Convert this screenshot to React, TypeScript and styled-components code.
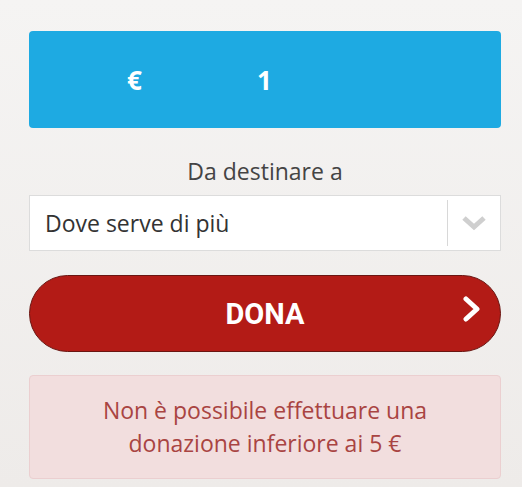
import React from "react";
import styled, { createGlobalStyle } from "styled-components";

const Global = createGlobalStyle`
  html, body { margin: 0; padding: 0; }
  body {
    background: linear-gradient(#f5f4f3, #eeebe9);
    min-height: 487px;
    font-family: "Open Sans", "Liberation Sans", sans-serif;
  }
`;

const Page = styled.div`
  padding: 31px 21px 0 29px;
  display: flex;
  flex-direction: column;
  width: 472px;
`;

const AmountBox = styled.div`
  height: 97px;
  background: #1eaae2;
  border-radius: 4px;
  display: grid;
  grid-template-columns: 98px 14px 116px auto;
  align-items: center;
  color: #fff;
  font-weight: 700;
  font-size: 26px;
`;

const Cell = styled.span<{ $col: number }>`
  grid-column: ${(p) => p.$col};
`;

const Label = styled.div`
  margin-top: 29px;
  text-align: center;
  font-size: 23px;
  color: #444;
  line-height: 28px;
`;

const Select = styled.div`
  margin-top: 10px;
  height: 56px;
  background: #fff;
  border: 1px solid #dcdcdc;
  display: flex;
  align-items: center;
  box-sizing: border-box;
`;

const SelectText = styled.span`
  flex: 1;
  padding-left: 15px;
  font-size: 23px;
  color: #333;
`;

const Divider = styled.span`
  width: 1px;
  height: 46px;
  background: #d8d8d8;
`;

const Chevron = styled.span`
  width: 52px;
  display: flex;
  justify-content: center;
`;

const Dona = styled.button`
  margin-top: 24px;
  height: 77px;
  border-radius: 39px;
  background: #b31b16;
  border: 1px solid #6a1612;
  color: #fff;
  font-family: "Roboto", "Liberation Sans", sans-serif;
  font-weight: 700;
  font-size: 29px;
  position: relative;
  display: flex;
  align-items: center;
  justify-content: center;
`;

const DonaArrow = styled.span`
  position: absolute;
  right: 18px;
  top: 20px;
  display: flex;
`;

const Alert = styled.div`
  margin-top: 23px;
  height: 104px;
  box-sizing: border-box;
  background: #f2dede;
  border: 1px solid #ebcfd0;
  border-radius: 4px;
  color: #a94442;
  font-size: 23px;
  line-height: 33px;
  text-align: center;
  padding-top: 18px;
`;

export default function App() {
  return (
    <>
      <Global />
      <Page>
        <AmountBox>
          <Cell $col={2}>€</Cell>
          <Cell $col={4}>1</Cell>
        </AmountBox>
        <Label>Da destinare a</Label>
        <Select>
          <SelectText>Dove serve di più</SelectText>
          <Divider />
          <Chevron>
            <svg width="26" height="16" viewBox="0 0 26 16">
              <path d="M3 3 L13 12 L23 3" fill="none" stroke="#cfcfcf" strokeWidth="5" />
            </svg>
          </Chevron>
        </Select>
        <Dona>
          DONA
          <DonaArrow>
            <svg width="20" height="26" viewBox="0 0 20 26">
              <path d="M4 3 L15 13 L4 23" fill="none" stroke="#fff" strokeWidth="5" strokeLinecap="round" strokeLinejoin="round" />
            </svg>
          </DonaArrow>
        </Dona>
        <Alert>
          Non è possibile effettuare una
          <br />
          donazione inferiore ai 5 €
        </Alert>
      </Page>
    </>
  );
}
